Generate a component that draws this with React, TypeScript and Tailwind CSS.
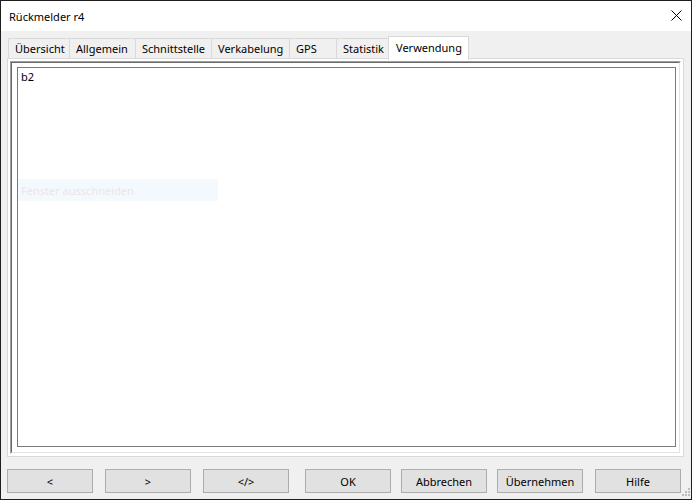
import React from "react";

const tabs = [
  { label: "Übersicht", w: "w-[61px]" },
  { label: "Allgemein", w: "w-[66px]" },
  { label: "Schnittstelle", w: "w-[76px]" },
  { label: "Verkabelung", w: "w-[78px]" },
  { label: "GPS", w: "w-[47px]" },
  { label: "Statistik", w: "w-[52px]" },
];

const buttons = [
  { label: "<", ml: "ml-[6px]" },
  { label: ">", ml: "ml-[12px]" },
  { label: "</>", ml: "ml-[12px]" },
  { label: "OK", ml: "ml-[16px]" },
  { label: "Abbrechen", ml: "ml-[10px]" },
  { label: "Übernehmen", ml: "ml-[10px]" },
  { label: "Hilfe", ml: "ml-[12px]" },
];

export default function App() {
  return (
    <div
      className="relative w-[692px] h-[500px] border border-[#1f1f1f] bg-[#f0f0f0] text-[11px] text-black overflow-hidden"
      style={{ fontFamily: '"Noto Sans", "Segoe UI", sans-serif' }}
    >
      {/* Title bar */}
      <div className="h-[30px] bg-white flex items-center pl-[8px] relative">
        <span className="text-[11px] leading-none">Rückmelder r4</span>
        <svg
          className="absolute left-[670px] top-[9px]"
          width="11"
          height="11"
          viewBox="0 0 11 11"
        >
          <path d="M0.5 0.5 L10.5 10.5 M10.5 0.5 L0.5 10.5" stroke="#000" strokeWidth="1" />
        </svg>
      </div>

      {/* Tabs */}
      <div className="mt-[5px] h-[22px] ml-[7px] flex items-end">
        {tabs.map((t) => (
          <div
            key={t.label}
            className={`${t.w} h-[20px] border-t border-l border-[#d9d9d9] bg-[#f0f0f0] pl-[6px] flex items-center leading-none`}
          >
            {t.label}
          </div>
        ))}
        <div className="relative z-10 w-[81px] h-[24px] -mb-[2px] border-t border-x border-[#d9d9d9] bg-white pl-[7px] pb-[3px] flex items-center leading-none">
          Verwendung
        </div>
      </div>

      {/* Tab page */}
      <div className="ml-[6px] w-[677px] h-[399px] border border-[#d9d9d9] bg-white p-[2px]">
        <div className="h-full border border-t-[#a0a0a0] border-l-[#a0a0a0] border-b-white border-r-white">
          <div className="h-full border border-t-[#696969] border-l-[#696969] border-b-[#e3e3e3] border-r-[#e3e3e3] bg-white pt-[4px] pl-[5px] pr-[3px] pb-[5px]">
            <div className="relative h-full border border-[#7a7a7a] bg-white pl-[3px] pt-[2px] leading-[14px]">
              b2
              <div className="absolute left-0 top-[111px] w-[200px] h-[22px] bg-[#f4f9fe] pl-[3px] flex items-center text-[#ebe6e6] leading-none">
                Fenster ausschneiden
              </div>
            </div>
          </div>
        </div>
      </div>

      {/* Buttons */}
      <div className="mt-[12px] flex">
        {buttons.map((b) => (
          <div
            key={b.label}
            className={`${b.ml} w-[86px] h-[24px] border border-[#adadad] bg-[#e1e1e1] flex items-center justify-center leading-none`}
          >
            {b.label}
          </div>
        ))}
      </div>

      {/* Resize grip */}
      <svg className="absolute left-[681px] top-[487px]" width="9" height="9" viewBox="0 0 9 9">
        <rect x="6" y="0" width="2" height="2" fill="#bcbcbc" />
        <rect x="3" y="3" width="2" height="2" fill="#bcbcbc" />
        <rect x="6" y="3" width="2" height="2" fill="#bcbcbc" />
        <rect x="0" y="6" width="2" height="2" fill="#bcbcbc" />
        <rect x="3" y="6" width="2" height="2" fill="#bcbcbc" />
        <rect x="6" y="6" width="2" height="2" fill="#bcbcbc" />
      </svg>
    </div>
  );
}
